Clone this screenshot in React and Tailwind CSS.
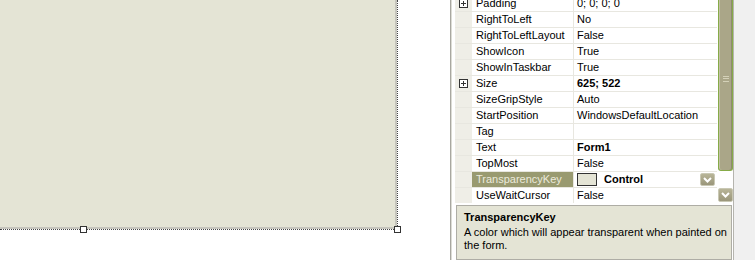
import React from 'react';

const rows = [
  { name: 'Padding', value: '0; 0; 0; 0', expand: true },
  { name: 'RightToLeft', value: 'No' },
  { name: 'RightToLeftLayout', value: 'False' },
  { name: 'ShowIcon', value: 'True' },
  { name: 'ShowInTaskbar', value: 'True' },
  { name: 'Size', value: '625; 522', expand: true, bold: true },
  { name: 'SizeGripStyle', value: 'Auto' },
  { name: 'StartPosition', value: 'WindowsDefaultLocation' },
  { name: 'Tag', value: '' },
  { name: 'Text', value: 'Form1', bold: true },
  { name: 'TopMost', value: 'False' },
  { name: 'TransparencyKey', value: 'Control', bold: true, selected: true },
  { name: 'UseWaitCursor', value: 'False' },
];

const Chevron = () => (
  <svg width="9" height="6" viewBox="0 0 9 6">
    <path d="M1 1 L4.5 4.5 L8 1" fill="none" stroke="#fff" strokeWidth="2" />
  </svg>
);

const DropButton = ({ className = '' }) => (
  <div
    className={`flex items-center justify-center w-[15px] h-[13px] rounded-[2px] border border-[#c9c8b4] bg-gradient-to-b from-[#b8b598] to-[#9a967a] ${className}`}
  >
    <Chevron />
  </div>
);

const ExpandBox = () => (
  <div className="relative w-[9px] h-[9px] border border-[#333] bg-white">
    <div className="absolute left-[1px] top-[3px] w-[5px] h-[1px] bg-[#333]" />
    <div className="absolute left-[3px] top-[1px] w-[1px] h-[5px] bg-[#333]" />
  </div>
);

const Handle = ({ className }) => (
  <div className={`absolute w-[7px] h-[7px] bg-white border border-[#333] ${className}`} />
);

const GridRow = ({ row }) => (
  <div className="flex h-[16px] border-b border-[#e8e7e0]">
    <div className="w-[17px] flex items-center justify-center bg-[#efeee7]">
      {row.expand && <ExpandBox />}
    </div>
    <div
      className={`w-[102px] pl-[4px] flex items-center border-r border-[#e8e7e0] ${
        row.selected ? 'bg-[#999a70] text-[#ecebdc]' : 'bg-white text-black'
      }`}
    >
      {row.name}
    </div>
    <div className={`flex-1 flex items-center pl-[3px] bg-white ${row.bold ? 'font-bold' : ''}`}>
      {row.selected && (
        <div className="w-[20px] h-[13px] mr-[7px] border border-[#333] bg-[#e4e4d5]" />
      )}
      <span className="flex-1">{row.value}</span>
      {row.selected && <DropButton className="mr-[2px]" />}
    </div>
  </div>
);

export default function App() {
  return (
    <div className="flex w-[755px] h-[260px] overflow-hidden bg-white text-[11px] font-['Liberation_Sans',Arial,sans-serif]">
      {/* Designer surface */}
      <div className="relative w-[450px] h-full bg-white">
        <div className="w-[398px] h-[230px] border-r border-b border-dotted border-[#444]">
          <div className="w-full h-full bg-[#e4e4d5] border-r-2 border-b-2 border-[#c6c5bd]" />
        </div>
        <Handle className="left-[80px] top-[226px]" />
        <Handle className="left-[394px] top-[226px]" />
      </div>

      {/* Property window */}
      <div className="flex w-[283px] h-full border-l border-[#a8a7a0]">
        <div className="w-[1px] bg-[#dcdcd5]" />
        <div className="w-[1px] bg-[#92918a]" />
        <div className="flex-1 flex flex-col bg-white pl-[3px]">
          <div className="flex h-[203px] overflow-hidden">
            <div className="w-[262px] -mt-[4px]">
              {rows.map((row) => (
                <GridRow key={row.name} row={row} />
              ))}
            </div>
            <div className="w-[16px] flex flex-col pl-[1px]">
              <div className="relative h-[171px] rounded-b-[3px] border-x border-b border-[#86ab48] bg-[#aaa688] shadow-[inset_1px_0_0_#c4c1a6,inset_-1px_0_0_#8f8b6f]">
                <div className="absolute left-[4px] top-[76px] w-[6px] h-[6px] border-y border-[#d4d1b8]">
                  <div className="mt-[1px] h-[1px] bg-[#d4d1b8]" />
                </div>
              </div>
              <div className="flex-1" />
              <DropButton className="w-[14px] h-[14px] mb-[1px]" />
            </div>
          </div>
          <div className="flex-1 mt-[2px] mr-[1px] ml-[1px] border border-[#aeada5] bg-[#e4e4d5] pl-[7px] pt-[5px] leading-[13px]">
            <div className="font-bold">TransparencyKey</div>
            <div className="mt-[2px] w-[266px]">
              A color which will appear transparent when painted on the form.
            </div>
          </div>
        </div>
      </div>
      <div className="flex-1 h-full bg-[#f0f0f0] border-l border-[#b5b4ae]" />
    </div>
  );
}
